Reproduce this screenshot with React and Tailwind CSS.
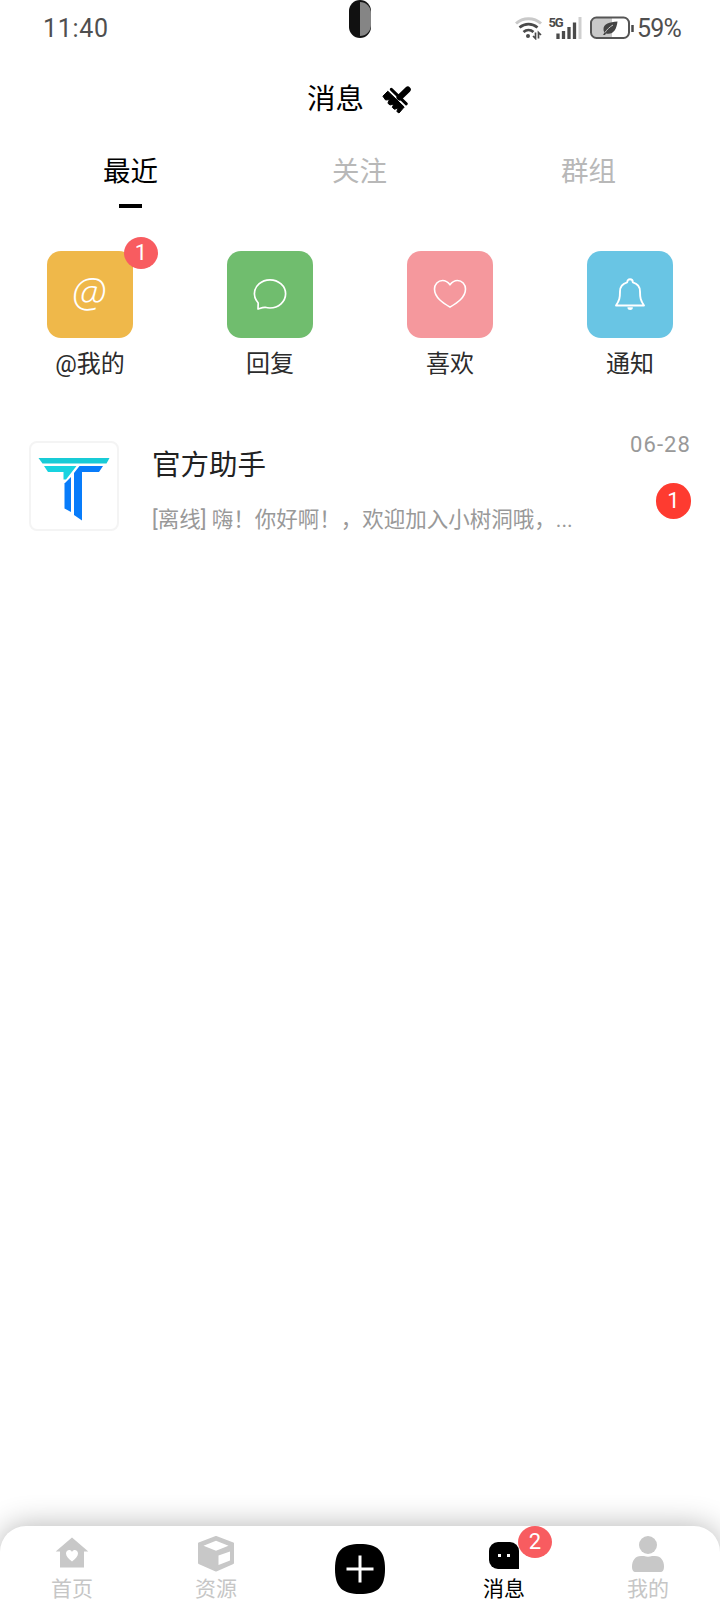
const tabs = ['最近', '关注', '群组'];

const shortcuts = [
  { label: '@我的', color: 'bg-[#efb84a]', icon: AtIcon, badge: 1 },
  { label: '回复', color: 'bg-[#70bd6e]', icon: ReplyIcon },
  { label: '喜欢', color: 'bg-[#f5989d]', icon: HeartIcon },
  { label: '通知', color: 'bg-[#69c5e4]', icon: BellIcon },
];

const navItems = [
  { label: '首页', icon: HomeIcon },
  { label: '资源', icon: BoxIcon },
  { label: null, icon: PlusIcon },
  { label: '消息', icon: MessageIcon, active: true, badge: 2 },
  { label: '我的', icon: UserIcon },
];

function AtIcon() {
  return (
    <span className="font-['Open_Sans','Noto_Sans_CJK_SC',sans-serif] text-[41px] font-light italic leading-none text-white -translate-x-[1px] -translate-y-[3px]">
      @
    </span>
  );
}

function ReplyIcon() {
  return (
    <svg width="34" height="34" viewBox="0 0 34 34" fill="none" stroke="#fff" strokeWidth="1.7" strokeLinejoin="round">
      <path d="M5 31 5.200 25C2.400 21.800 1.400 18.800 1.400 15.800 1.400 8 8.400 1.800 17 1.800s15.600 6.200 15.600 14S25.600 30 17 30c-1.800 0-3.300-.2-4.900-.7-1.800-.1-4.600.9-7.100 1.700z" />
    </svg>
  );
}

function HeartIcon() {
  return (
    <svg width="34" height="34" viewBox="0 0 34 34" fill="none" stroke="#fff" strokeWidth="1.6" strokeLinejoin="round">
      <path d="M17 6.800C14.800 3.800 12.300 2.500 9.600 2.500 5 2.500 1.500 6.200 1.500 11.100c0 8.600 8.500 13.800 15.500 18 7-4.200 15.500-9.400 15.500-18C32.500 6.200 29 2.500 24.400 2.500 21.700 2.500 19.200 3.800 17 6.800z" />
    </svg>
  );
}

function BellIcon() {
  return (
    <svg width="34" height="34" viewBox="0 0 34 34" fill="none" stroke="#fff" strokeWidth="1.9" strokeLinejoin="round">
      <path d="M14.200 4.300c0-1.900 1.100-3 2.800-3s2.800 1.100 2.800 3C24.500 5.500 27 9 27 13.500c0 6.500.6 9 4 14H3c3.400-5 4-7.500 4-14C7 9 9.500 5.500 14.200 4.300z" />
      <path d="M14.500 29.300h5.300v.8c0 1.200-1 1.900-2.600 1.900s-2.700-.7-2.700-1.900z" fill="#fff" stroke="none" />
    </svg>
  );
}

function HomeIcon() {
  return (
    <svg width="34" height="36" viewBox="0 0 34 36" fill="#c8c8c8">
      <path d="M17 1.500 33.300 15.500H29V31.500H5V15.500H.7z" />
      <path d="M17 25.500c-3.500-2.900-6-5-6-8 0-3.500 4.300-4.800 6-1.600 1.700-3.200 6-1.900 6 1.600 0 3-2.500 5.100-6 8z" fill="#fff" />
    </svg>
  );
}

function BoxIcon() {
  return (
    <svg width="36" height="36" viewBox="0 0 36 36">
      <path d="M18 1 35 7.500V27L18 34.500 1 27V7.500z" fill="#c8c8c8" stroke="#c8c8c8" strokeWidth="2" strokeLinejoin="round" />
      <path d="M18 4.700 30.500 9.700 18 14.700 5.500 9.700z" fill="#fff" />
      <path d="M20.500 19.500 32 15.500V24.500L20.500 29z" fill="#fff" />
    </svg>
  );
}

function PlusIcon() {
  return (
    <svg width="50" height="50" viewBox="0 0 50 50">
      <path d="M25 0C42 0 50 6 50 25S42 50 25 50 0 44 0 25 8 0 25 0z" fill="#000" />
      <path d="M25 11.500v27M11.500 25h27" stroke="#fff" strokeWidth="3" />
    </svg>
  );
}

function MessageIcon() {
  return (
    <svg width="30" height="36" viewBox="0 0 30 36">
      <path d="M9 6h12a9 9 0 0 1 9 9v18H9a9 9 0 0 1-9-9v-9a9 9 0 0 1 9-9z" fill="#000" />
      <path d="M9 18h3v3H9zM18 18h3v3h-3z" fill="#fff" />
    </svg>
  );
}

function UserIcon() {
  return (
    <svg width="32" height="36" viewBox="0 0 32 36" fill="#c8c8c8">
      <circle cx="16" cy="9" r="9" />
      <path d="M9 20h3c2.500 1 5.500 1 8 0h3c6 0 9 5 9 10.500 0 3.500-1 5.500-4 5.500H4c-3 0-4-2-4-5.500C0 25 3 20 9 20z" />
    </svg>
  );
}

function BrushIcon() {
  return (
    <svg width="30" height="28" viewBox="0 0 30 28">
      {/* handle and ferrule */}
      <path d="M17.500 11.500 25.800 3.500" stroke="#000" strokeWidth="6" strokeLinecap="round" />
      <path d="M9.300 3.300 24.300 17.800" stroke="#000" strokeWidth="3" strokeLinecap="round" />
      {/* bristles */}
      <path
        d="M5.800 5.200 22.200 21 17 27 14.800 25.400 16.300 22 12.500 23.300 10.300 21.400 11.800 18 8 19 5.900 17.200 7.400 13.600 3.600 14 .9 10.200z"
        fill="#000"
        stroke="#000"
        strokeWidth="1"
        strokeLinejoin="round"
      />
    </svg>
  );
}

function LogoIcon() {
  return (
    <svg width="72" height="64" viewBox="0 0 72 64">
      <path d="M.5 0h71l-3 5.500H4.500z" fill="#18cbd6" />
      <path d="M6 8h32.500L28 21.500h-2.500V14H10z" fill="#18d3e0" />
      <path d="M41.500 8H65l-4 6H44v48.500L36 57V15z" fill="#087cfa" />
      <path d="M33 19v35L26.500 50.500V25.500z" fill="#087cfa" />
    </svg>
  );
}

function StatusIcons() {
  return (
    <svg width="120" height="24" viewBox="515 15 120 24" fill="none">
      {/* wifi */}
      <path d="M516 22.500c7-6.500 18-6.500 25 0" stroke="#c9c9c9" strokeWidth="3" />
      <path d="M519.500 26.500c5.500-4.500 12.500-4.500 18 0M523.500 31c3-2.500 7-2.500 10 0" stroke="#4a4a4a" strokeWidth="2.800" />
      <circle cx="528" cy="35" r="2" fill="#4a4a4a" />
      <path d="M535.500 31.500v6l-2.500-2.500M538.500 37.500v-6l2.500 2.500" stroke="#4a4a4a" strokeWidth="1.700" />
      {/* signal */}
      <text x="548.500" y="26" fill="#4a4a4a" fontSize="13" fontWeight="700" fontFamily="Roboto, sans-serif" textLength="15">
        5G
      </text>
      <path d="M558 32.500v5.500M563.500 30v8M569 26v12M574.500 21.500V38" stroke="#4a4a4a" strokeWidth="3.300" />
      <path d="M580 16v22" stroke="#cfcfcf" strokeWidth="3" />
      {/* battery */}
      <path d="M597 17h15v20h-15a5 5 0 0 1-5-5V22a5 5 0 0 1 5-5z" fill="#c9c9c9" />
      <rect x="591" y="16.500" width="38" height="20.500" rx="5.500" stroke="#555" strokeWidth="2" />
      <path d="M632.500 24v7" stroke="#4a4a4a" strokeWidth="2.500" />
      <path d="M617.500 20.500c-8 .5-14 2.500-14 7.500 0 1.500.3 2.500 1 3.500l-1.500 2.500h2l1-1.500c7 1.500 10.500-3.500 11.500-12z" fill="#444" />
      <path d="M605 31.500c2-3 4.500-5.500 8-7.500" stroke="#c9c9c9" strokeWidth="1" />
    </svg>
  );
}

function Badge({ count, className = '' }) {
  return (
    <span className={`absolute flex h-8 w-[34px] items-center justify-center rounded-[50%] bg-[#f85c60] text-[22px] leading-none text-white ${className}`}>
      {count}
    </span>
  );
}

function StatusBar() {
  return (
    <header className="relative flex h-14 items-center justify-between pl-[43px] pr-[39px] text-[25px] text-[#4f4f4f]">
      <span className="pt-[2px] tracking-[0.7px]">11:40</span>
      {/* camera cutout */}
      <div className="absolute left-[349px] top-0 flex h-[38px] w-[22px] overflow-hidden rounded-full bg-[#111]">
        <div className="my-[2px] ml-[11px] flex-1 rounded-r-full bg-[#858585]" />
      </div>
      <div className="flex items-center gap-[2px]">
        <StatusIcons />
        <span className="pt-[2px] -tracking-[0.8px]">59%</span>
      </div>
    </header>
  );
}

function ShortcutItem({ item }) {
  const Icon = item.icon;
  return (
    <div className="flex flex-1 flex-col items-center">
      <div className={`relative flex h-[87px] w-[86px] items-center justify-center rounded-[14px] ${item.color}`}>
        <Icon />
        {item.badge && <Badge count={item.badge} className="-right-[25px] -top-[14px]" />}
      </div>
      <span className="mt-[8px] text-2xl leading-9 text-[#2c2c2c]">{item.label}</span>
    </div>
  );
}

function NavItem({ item }) {
  const Icon = item.icon;
  if (!item.label) {
    return (
      <button className="flex flex-1 justify-center pt-[18px]">
        <Icon />
      </button>
    );
  }
  return (
    <button className={`flex flex-1 flex-col items-center pt-[10px] ${item.active ? 'text-black' : 'text-[#c6c6c6]'}`}>
      <div className="relative">
        <Icon />
        {item.badge && <Badge count={item.badge} className="-right-[33px] -top-[10px]" />}
      </div>
      <span className="mt-[2px] text-[21px] leading-[30px]">{item.label}</span>
    </button>
  );
}

export default function App() {
  return (
    <div className="flex h-[1612px] w-[720px] flex-col overflow-hidden bg-white font-[Roboto,'Noto_Sans_CJK_SC',sans-serif]">
      <StatusBar />

      <div className="flex h-[86px] items-center justify-center gap-[18px] pr-[1px] pt-[2px]">
        <h1 className="text-[28.500px] leading-none text-black">消息</h1>
        <BrushIcon />
      </div>

      <nav className="flex pl-4 pr-[17px]">
        {tabs.map((tab, i) => (
          <button
            key={tab}
            className={`flex flex-1 flex-col items-center pt-[1px] text-[27.500px] leading-[58px] ${i === 0 ? 'text-black' : 'text-[#b8b8b8]'}`}
          >
            {tab}
            {i === 0 && <span className="mt-[3px] h-1 w-[23px] bg-black" />}
          </button>
        ))}
      </nav>

      <section className="mt-[43px] flex">
        {shortcuts.map((item) => (
          <ShortcutItem key={item.label} item={item} />
        ))}
      </section>

      <section className="mt-[59px] flex pl-[29px] pr-[29px]">
        <div className="flex h-[90px] w-[90px] shrink-0 justify-center rounded-lg border-2 border-[#f4f4f4] pt-[15px]">
          <LogoIcon />
        </div>
        <div className="ml-[33px] flex-1">
          <h2 className="mt-[4px] text-[28.500px] leading-[42px] text-[#222]">官方助手</h2>
          <p className="mt-[17px] w-[430px] truncate text-[21.500px] leading-8 text-[#999]">
            [离线] 嗨！你好啊！，欢迎加入小树洞哦，...
          </p>
        </div>
        <div className="flex flex-col items-end">
          <time className="-mt-[7px] whitespace-nowrap text-[22px] leading-[22px] tracking-[1.100px] text-[#999]">06-28</time>
          <span className="mt-[27px] flex h-9 w-[35px] items-center justify-center rounded-full bg-[#fe3b30] text-[22px] leading-none text-white">
            1
          </span>
        </div>
      </section>

      <footer className="mt-auto flex h-[86px] rounded-t-[26px] bg-white shadow-[0_0_30px_rgba(0,0,0,0.3)]">
        {navItems.map((item, i) => (
          <NavItem key={i} item={item} />
        ))}
      </footer>
    </div>
  );
}
